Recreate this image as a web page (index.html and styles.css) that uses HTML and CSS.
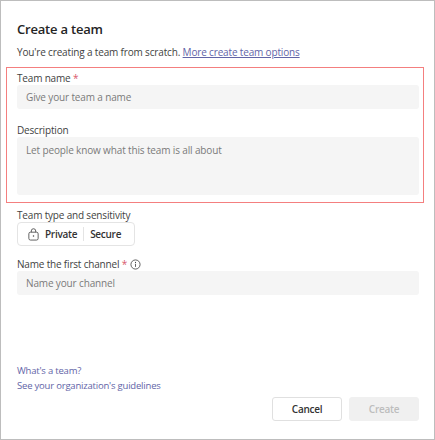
FILE: index.html
```html
<!DOCTYPE html>
<html lang="en">
<head>
<meta charset="utf-8">
<title>Create a team</title>
<link rel="stylesheet" href="styles.css">
</head>
<body>
<div class="dialog">
  <h1 class="title">Create a team</h1>
  <p class="intro">You're creating a team from scratch. <a class="intro-link" href="#">More create team options</a></p>
  <section class="highlight">
    <label class="label">Team name <span class="req">*</span></label>
    <div class="input">Give your team a name</div>
    <label class="label label-gap">Description</label>
    <div class="input textarea">Let people know what this team is all about</div>
  </section>
  <label class="label label-type">Team type and sensitivity</label>
  <div class="pill">
    <span class="pill-part pill-private">
      <svg class="lock" viewBox="0 0 14 14" width="13" height="13" aria-hidden="true">
        <path d="M4.6 4.5V3.2a2.4 2.4 0 0 1 4.8 0v1.3" fill="none" stroke="#444" stroke-width="0.9"/>
        <rect x="2" y="4.5" width="10" height="8.5" rx="1.8" fill="none" stroke="#444" stroke-width="0.9"/>
        <circle cx="7" cy="8.7" r="0.8" fill="#444"/>
      </svg>
      Private
    </span>
    <span class="pill-part pill-secure">Secure</span>
  </div>
  <div class="label label-channel">
    <span>Name the first channel <span class="req">*</span></span>
    <svg class="info" viewBox="0 0 12 12" width="11" height="11" aria-hidden="true">
      <circle cx="6" cy="6" r="5" fill="none" stroke="#444" stroke-width="0.9"/>
      <rect x="5.55" y="5.2" width="0.9" height="3.4" fill="#444"/>
      <circle cx="6" cy="3.7" r="0.6" fill="#444"/>
    </svg>
  </div>
  <div class="input">Name your channel</div>
  <div class="links">
    <a class="link" href="#">What's a team?</a>
    <a class="link" href="#">See your organization's guidelines</a>
  </div>
  <div class="actions">
    <button class="btn btn-cancel" type="button">Cancel</button>
    <button class="btn btn-create" type="button" disabled>Create</button>
  </div>
</div>
</body>
</html>
```
FILE: styles.css
```css
* { box-sizing: border-box; }
html, body { margin: 0; padding: 0; }
body {
  width: 435px;
  height: 440px;
  background: #fff;
  font-family: "Open Sans", "Noto Sans", sans-serif;
  color: #424242;
  overflow: hidden;
}
.dialog {
  width: 435px;
  height: 440px;
  border: 1px solid #bdbdbd;
  padding: 19px 15px 18px 16px;
  display: flex;
  flex-direction: column;
}
.title {
  margin: 0;
  font-size: 13px;
  line-height: 18px;
  font-weight: 600;
  letter-spacing: -0.2px;
  color: #242424;
}
.intro {
  margin: 7px 0 0;
  font-size: 10px;
  line-height: 14px;
  letter-spacing: -0.16px;
  color: #424242;
}
.intro-link { color: #6264a7; text-decoration: underline; }
.highlight {
  margin: 8px -5px 0 -11px;
  padding: 3px 4px 7px 10px;
  border: 1px solid #f47f7f;
  height: 136px;
  display: flex;
  flex-direction: column;
}
.label {
  display: block;
  font-size: 10px;
  line-height: 14px;
  letter-spacing: -0.18px;
  color: #424242;
}
.label-gap { margin-top: 14px; }
.label-type { margin-top: 5px; }
.label-channel { margin-top: 11px; display: flex; align-items: center; gap: 3px; }
.req { color: #d9596c; }
.info { flex: none; }
.input {
  height: 24px;
  flex: none;
  background: #f5f5f5;
  border-radius: 3px;
  padding: 0 9px;
  font-size: 10px;
  line-height: 24px;
  letter-spacing: -0.14px;
  color: #7a7a7a;
}
.textarea {
  height: 58px;
  line-height: 14px;
  padding-top: 6px;
}
.pill {
  width: 118px;
  height: 24px;
  border: 1px solid #e4e4e4;
  border-radius: 4px;
  display: flex;
  align-items: center;
  font-size: 10px;
  font-weight: 600;
  letter-spacing: -0.28px;
  color: #333;
}
.pill-part { display: flex; align-items: center; }
.pill-private { gap: 5px; padding: 0 6px 0 9px; border-right: 1px solid #e4e4e4; height: 14px; }
.pill-secure { padding-left: 6px; }
.links {
  margin-top: auto;
  display: flex;
  flex-direction: column;
}
.link {
  font-size: 9.5px;
  line-height: 14.5px;
  letter-spacing: -0.2px;
  color: #6264a7;
  text-decoration: none;
}
.actions {
  margin-top: 4px;
  display: flex;
  justify-content: flex-end;
  gap: 7px;
}
.btn {
  width: 70px;
  height: 24px;
  border-radius: 3px;
  font-family: inherit;
  font-size: 10px;
  font-weight: 600;
  letter-spacing: -0.28px;
  padding: 0;
}
.btn-cancel { background: #fff; border: 1px solid #e0e0e0; color: #333; }
.btn-create { background: #f0f0f0; border: 1px solid #f0f0f0; color: #bdbdbd; }
```
